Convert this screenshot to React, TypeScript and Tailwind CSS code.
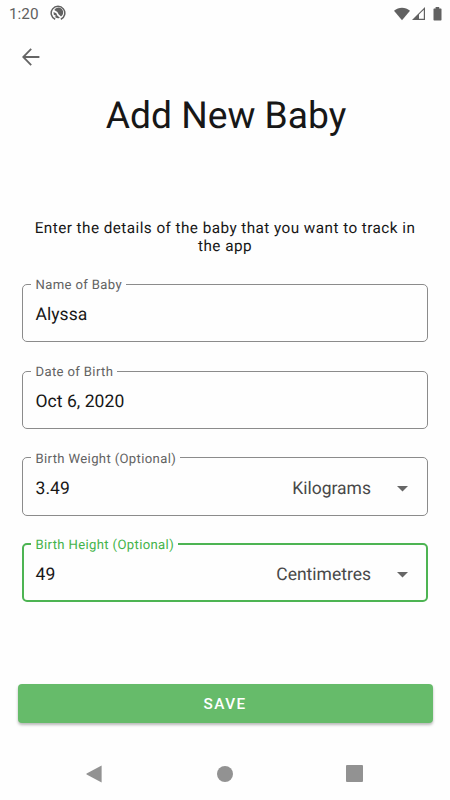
type FieldProps = {
  label: string;
  value: string;
  unit?: string;
  active?: boolean;
  legendWidth: string;
};

function Field({ label, value, unit, active, legendWidth }: FieldProps) {
  return (
    <fieldset
      className={`h-[66px] min-w-0 rounded-[5px] ${
        active ? "border-2 border-[#4db453] pl-[7px]" : "border border-[#8b8b8b] pl-[8px]"
      }`}
    >
      <legend
        className={`h-4 whitespace-nowrap pl-[4.5px] text-[13.1px] leading-[20px] tracking-[0.36px] ${legendWidth} ${
          active ? "text-[#43b34a]" : "text-[#626262]"
        }`}
      >
        {label}
      </legend>
      <div
        className={`flex h-[46px] items-center pl-[4.5px] text-[17.5px] text-[#171717] ${
          active ? "pr-[18.5px]" : "pr-[19.5px]"
        }`}
      >
        <span className="tracking-[0.05px]">{value}</span>
        {unit && (
          <>
            <span className="ml-auto text-[#484848]">{unit}</span>
            <svg className="ml-[25.5px]" width="11" height="6" viewBox="0 0 11 6">
              <path d="M0 0h11L5.5 5.5z" fill="#666" />
            </svg>
          </>
        )}
      </div>
    </fieldset>
  );
}

export default function App() {
  return (
    <div className="flex h-[800px] w-[450px] flex-col overflow-hidden bg-[#fefefe] font-['Roboto',sans-serif] text-[#171717] [text-rendering:geometricPrecision]">
      <header className="flex h-7 items-center pl-[9px] pr-[8px] text-[#616161]">
        <span className="text-[15.3px]">1:20</span>
        <svg className="ml-[11px] -mt-[2px]" width="16" height="16" viewBox="0 0 16 16">
          <path d="M5.2 14.3A6.8 6.8 0 1 1 10.8 14.3" fill="none" stroke="currentColor" strokeWidth="1.5" />
          <path d="M4.3 4.9A4.8 4.8 0 0 1 12.5 9.9L11 11.6 8.6 9.3 7.4 6.9z" fill="currentColor" />
          <path d="M3.5 7.1 6.3 8.3 7.3 10.6 9.9 12.7A4.8 4.8 0 0 1 4.6 11.8L6.4 11 3.8 9.8z" fill="currentColor" />
        </svg>
        <svg className="ml-auto" width="16" height="14" viewBox="0 0 16 14">
          <path d="M0 3.7C4.7-.3 11.3-.3 16 3.7L8 13.3z" fill="currentColor" />
        </svg>
        <svg className="ml-[2px]" width="14" height="14" viewBox="0 0 14 14">
          <path d="M0 13 13 0v13z" fill="currentColor" />
          <path d="M7 7.6 11.8 2.8v9H7z" fill="#fefefe" />
        </svg>
        <svg className="ml-[7px]" width="9" height="14" viewBox="0 0 9 14">
          <path d="M2.6 0h3.6v1.4h1.6q.7 0 .7.7v10.7q0 .7-.7.7H1.2q-.7 0-.7-.7V2.1q0-.7.7-.7h1.4z" fill="currentColor" />
        </svg>
      </header>
      <button aria-label="Back" className="ml-[22px] mt-[20px] h-[18px] w-[18px]">
        <svg width="18" height="18" viewBox="0 0 18 18" fill="none" stroke="#656565" strokeWidth="1.8">
          <path d="M17.4 9H1.4M9.2.9 1.2 9l8 8.1" />
        </svg>
      </button>
      <h1 className="mt-[27px] h-[46px] whitespace-nowrap pl-[2px] text-center text-[37.2px] leading-[46px]">
        Add New Baby
      </h1>
      <p className="mt-[80px] whitespace-nowrap text-center text-[15.3px] leading-[18px] tracking-[0.44px]">
        Enter the details of the baby that you want to track in
        <br />
        the app
      </p>
      <main className="mt-[21.4px] flex flex-col gap-[20.67px] px-[22px]">
        <Field label="Name of Baby" value="Alyssa" legendWidth="w-[95px]" />
        <Field label="Date of Birth" value="Oct 6, 2020" legendWidth="w-[86px]" />
        <Field label="Birth Weight (Optional)" value="3.49" unit="Kilograms" legendWidth="w-[149px]" />
        <Field label="Birth Height (Optional)" value="49" unit="Centimetres" active legendWidth="w-[147px]" />
      </main>
      <button className="ml-[17.5px] mt-[81.6px] h-[39.5px] w-[415px] shrink-0 rounded-[4px] bg-[#66bb6a] pt-[1px] text-[15.3px] font-medium tracking-[1.4px] text-white shadow-[0_2px_3px_rgba(0,0,0,0.28)]">
        SAVE
      </button>
      <nav className="mt-[41.3px] flex h-[18px] shrink-0 items-center pl-[86px] text-[#929292]">
        <svg width="16" height="18" viewBox="0 0 16 18">
          <path d="M15.6.4v17.2L.6 9.4q-.6-.4 0-.8z" fill="currentColor" />
        </svg>
        <span className="ml-[115px] size-4 rounded-full bg-current" />
        <span className="ml-[113px] size-[17px] rounded-[1px] bg-current" />
      </nav>
    </div>
  );
}
